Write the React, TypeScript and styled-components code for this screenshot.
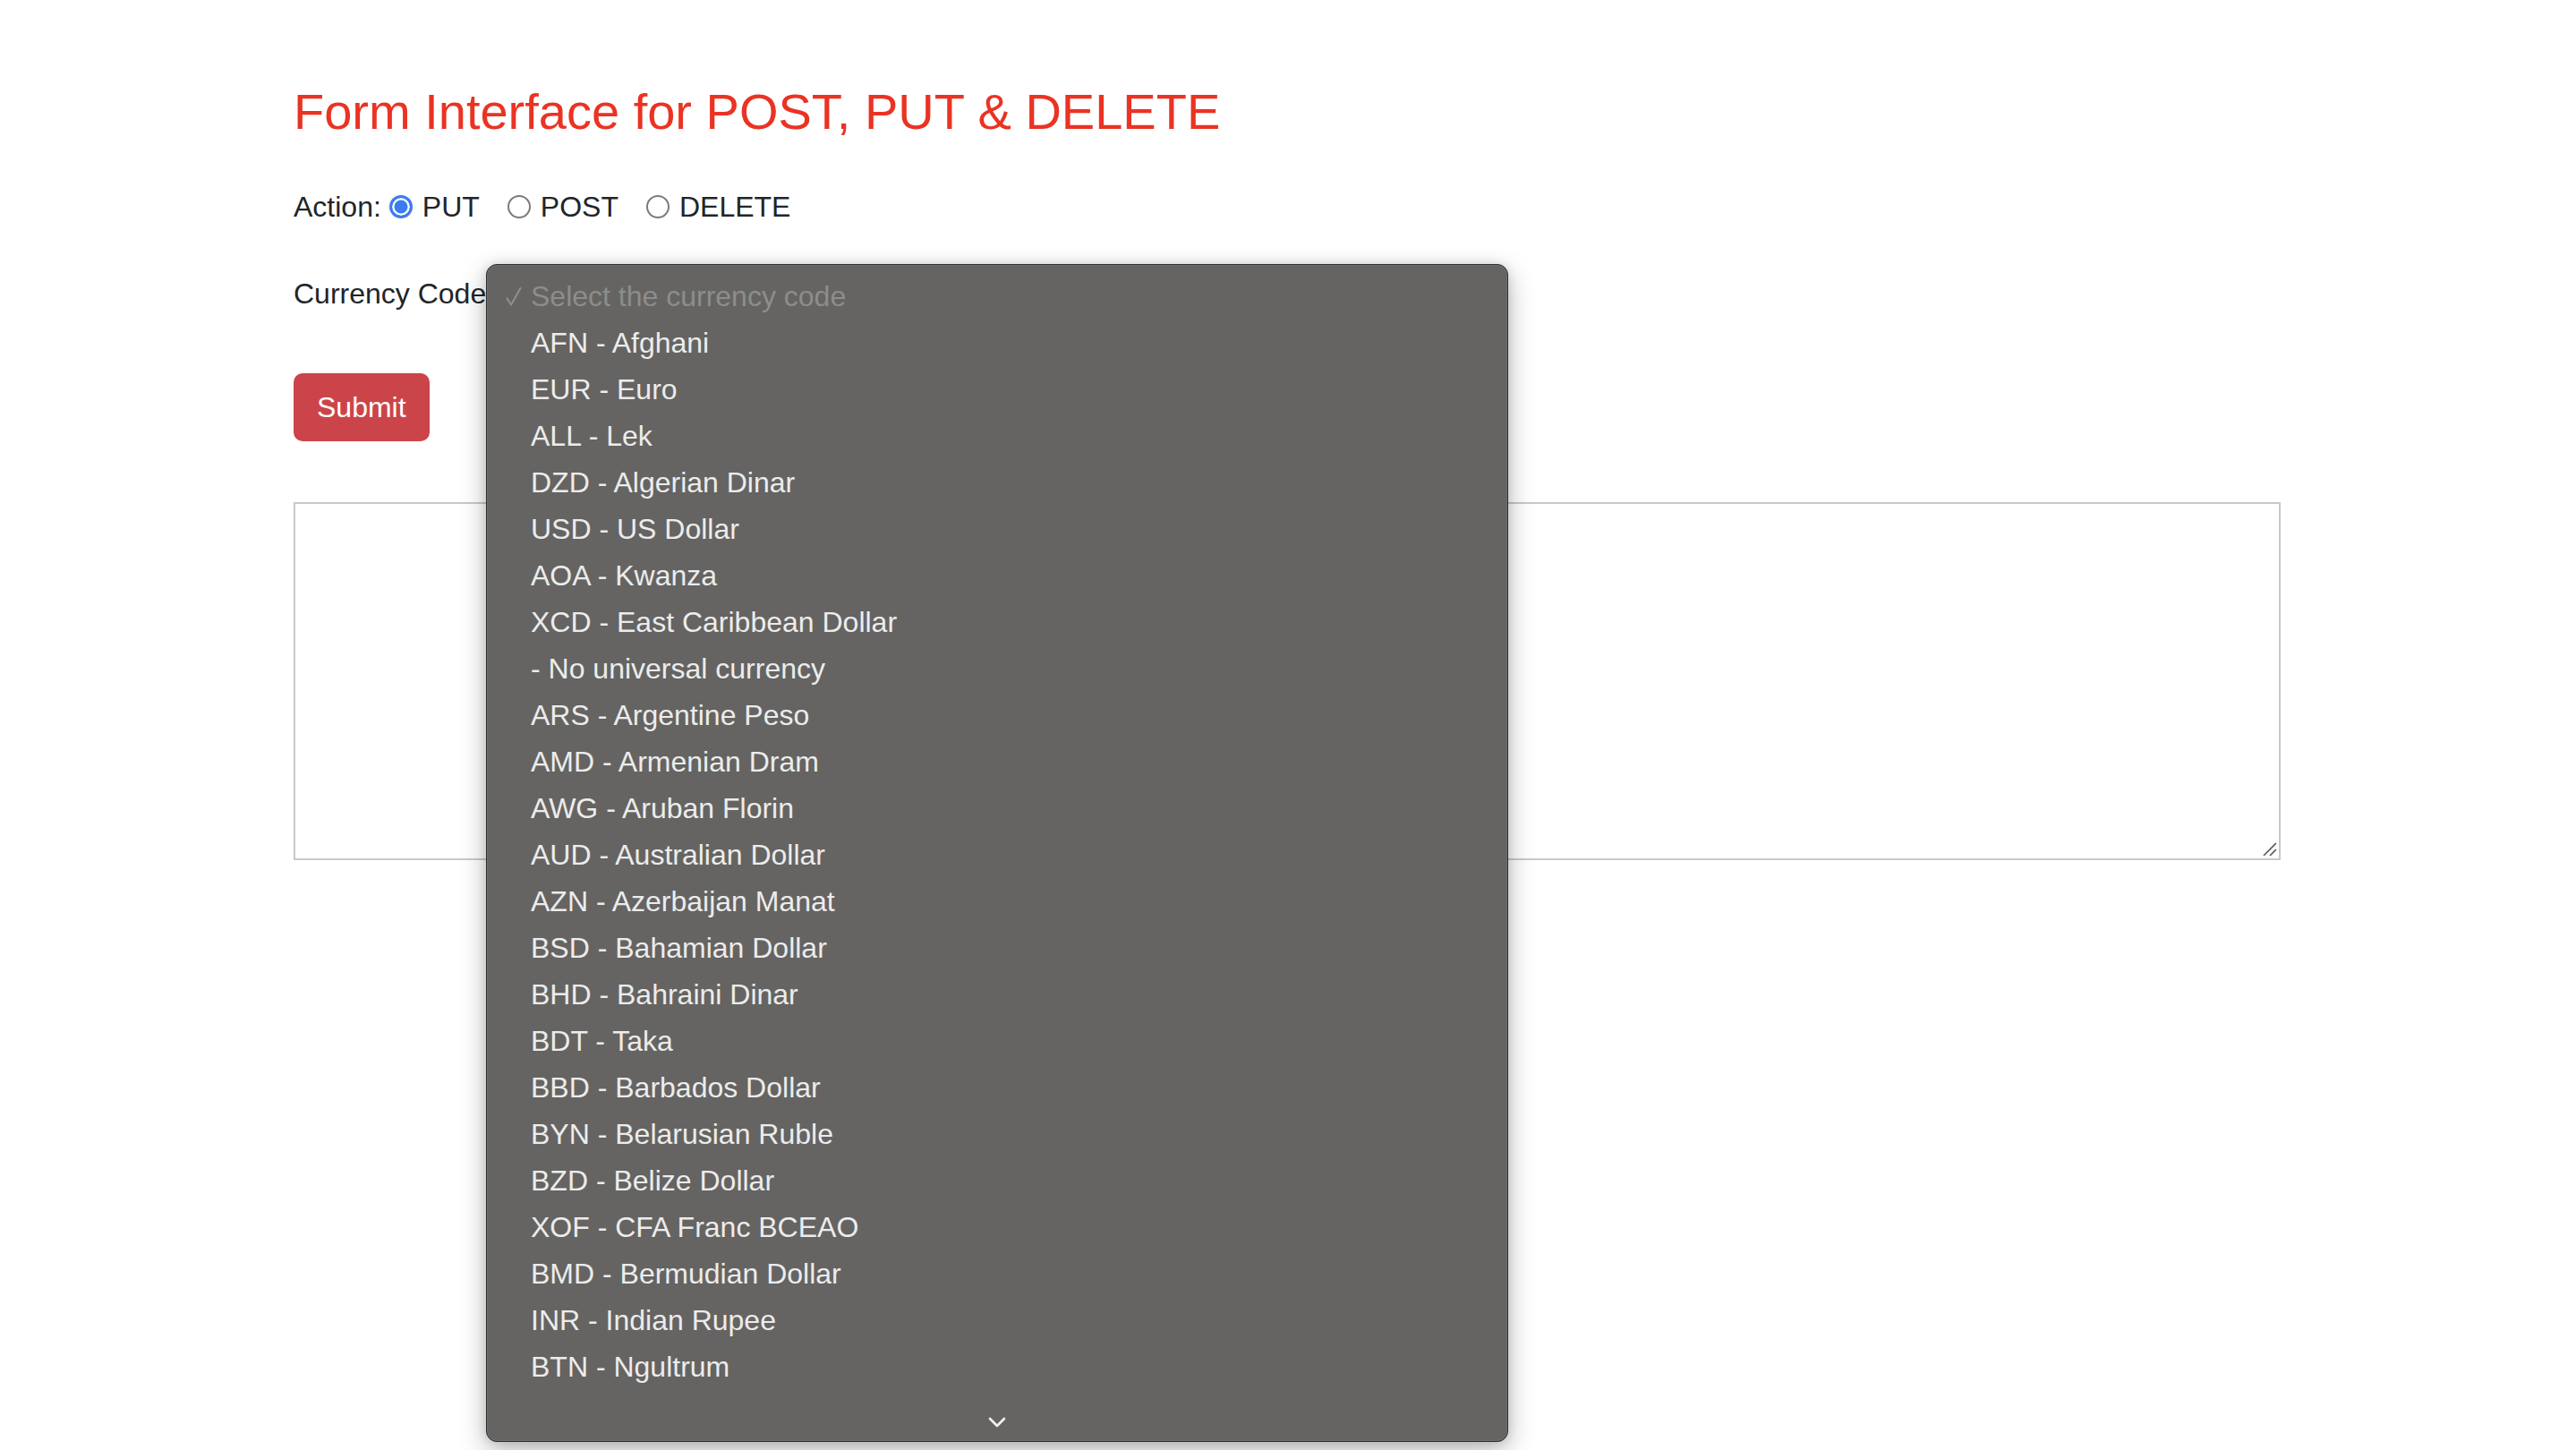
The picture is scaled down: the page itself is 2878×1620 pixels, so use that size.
import React from "react";
import styled, { createGlobalStyle } from "styled-components";

const GlobalStyle = createGlobalStyle`
  html, body {
    margin: 0;
    padding: 0;
    background: #ffffff;
  }
  body {
    font-family: "Liberation Sans", Arial, Helvetica, sans-serif;
    color: #212529;
  }
`;

const Page = styled.main`
  padding: 91px 0 0 328px;
  min-height: 1620px;
  box-sizing: border-box;
`;

const Title = styled.h1`
  margin: 0 0 49px;
  font-size: 56px;
  line-height: 67px;
  font-weight: 400;
  color: #ea3323;
`;

const Form = styled.form`
  display: flex;
  flex-direction: column;
  align-items: flex-start;
`;

const ActionRow = styled.div`
  display: flex;
  align-items: center;
  height: 48px;
  font-size: 32px;
  line-height: 48px;
  margin-bottom: 49px;
`;

const FieldLabel = styled.span`
  margin-right: 9px;
`;

const RadioOption = styled.label`
  display: flex;
  align-items: center;
  gap: 11px;
  margin-right: 31px;
  cursor: pointer;
`;

const Radio = styled.input.attrs({ type: "radio" })`
  appearance: none;
  -webkit-appearance: none;
  margin: 0;
  width: 26px;
  height: 26px;
  box-sizing: border-box;
  border-radius: 50%;
  border: 2px solid #7b7b7b;
  background: #ffffff;

  &:checked {
    border: 3px solid #3b7cf2;
    background: #3b7cf2;
    box-shadow: inset 0 0 0 2.5px #ffffff;
  }
`;

const CurrencyRow = styled.div`
  position: relative;
  height: 48px;
  font-size: 32px;
  line-height: 48px;
  margin-bottom: 65px;
  display: flex;
  align-items: center;
`;

const Popup = styled.div`
  position: absolute;
  top: -9px;
  left: 215px;
  width: 1142px;
  height: 1316px;
  box-sizing: border-box;
  display: flex;
  flex-direction: column;
  background: #656462;
  border: 1px solid #2e2e2e;
  border-radius: 12px;
  box-shadow: inset 0 0 0 1px rgba(255, 255, 255, 0.07),
    0 10px 30px rgba(0, 0, 0, 0.28), 0 0 12px rgba(0, 0, 0, 0.12);
  overflow: hidden;
  z-index: 10;
`;

const OptionList = styled.ul`
  list-style: none;
  margin: 0;
  padding: 8.5px 0 0;
`;

const OptionRow = styled.li<{ $placeholder?: boolean }>`
  display: grid;
  grid-template-columns: 49px 1fr;
  align-items: center;
  height: 52px;
  font-size: 32px;
  line-height: 52px;
  white-space: nowrap;
  color: ${(p) => (p.$placeholder ? "#8d8d8b" : "#ececec")};
`;

const CheckCell = styled.span`
  display: flex;
  align-items: center;
  padding-left: 21px;
`;

const ScrollFooter = styled.div`
  flex: 1;
  display: flex;
  justify-content: center;
  align-items: flex-start;
  padding-top: 30px;
`;

const SubmitButton = styled.button`
  font-family: inherit;
  font-size: 32px;
  line-height: 48px;
  padding: 12px 24px;
  border: 2px solid #cb444a;
  border-radius: 10px;
  background: #cb444a;
  color: #ffffff;
  margin-bottom: 68px;
  cursor: pointer;
`;

const TextAreaWrap = styled.div`
  position: relative;
  width: 2220px;
  height: 400px;
`;

const TextArea = styled.textarea`
  display: block;
  width: 100%;
  height: 100%;
  box-sizing: border-box;
  border: 2px solid #c9c9c9;
  border-radius: 0;
  resize: none;
  outline: none;
  font-family: inherit;
  font-size: 32px;
`;

const Grip = styled.svg`
  position: absolute;
  right: 4px;
  bottom: 4px;
  pointer-events: none;
`;

const currencies = [
  "AFN - Afghani",
  "EUR - Euro",
  "ALL - Lek",
  "DZD - Algerian Dinar",
  "USD - US Dollar",
  "AOA - Kwanza",
  "XCD - East Caribbean Dollar",
  "- No universal currency",
  "ARS - Argentine Peso",
  "AMD - Armenian Dram",
  "AWG - Aruban Florin",
  "AUD - Australian Dollar",
  "AZN - Azerbaijan Manat",
  "BSD - Bahamian Dollar",
  "BHD - Bahraini Dinar",
  "BDT - Taka",
  "BBD - Barbados Dollar",
  "BYN - Belarusian Ruble",
  "BZD - Belize Dollar",
  "XOF - CFA Franc BCEAO",
  "BMD - Bermudian Dollar",
  "INR - Indian Rupee",
  "BTN - Ngultrum",
];

const CheckMark = () => (
  <svg width="18" height="24" viewBox="0 0 18 24" fill="none">
    <path
      d="M1.5 14.5 L6 21.5 L16.5 3"
      stroke="#8d8d8b"
      strokeWidth="2.2"
      strokeLinecap="round"
      strokeLinejoin="round"
    />
  </svg>
);

const Chevron = () => (
  <svg width="20" height="12" viewBox="0 0 20 12" fill="none">
    <path
      d="M2 2 L10 10 L18 2"
      stroke="#f2f2f2"
      strokeWidth="2.6"
      strokeLinecap="round"
      strokeLinejoin="round"
    />
  </svg>
);

export default function App() {
  const [action, setAction] = React.useState("PUT");
  return (
    <>
      <GlobalStyle />
      <Page>
        <Title>Form Interface for POST, PUT &amp; DELETE</Title>
        <Form onSubmit={(e) => e.preventDefault()}>
          <ActionRow>
            <FieldLabel>Action:</FieldLabel>
            {["PUT", "POST", "DELETE"].map((a) => (
              <RadioOption key={a}>
                <Radio
                  name="action"
                  value={a}
                  checked={action === a}
                  onChange={() => setAction(a)}
                />
                {a}
              </RadioOption>
            ))}
          </ActionRow>
          <CurrencyRow>
            <span>Currency Code</span>
            <Popup role="listbox">
              <OptionList>
                <OptionRow $placeholder>
                  <CheckCell>
                    <CheckMark />
                  </CheckCell>
                  <span>Select the currency code</span>
                </OptionRow>
                {currencies.map((c) => (
                  <OptionRow key={c}>
                    <span />
                    <span>{c}</span>
                  </OptionRow>
                ))}
              </OptionList>
              <ScrollFooter>
                <Chevron />
              </ScrollFooter>
            </Popup>
          </CurrencyRow>
          <SubmitButton type="submit">Submit</SubmitButton>
          <TextAreaWrap>
            <TextArea />
            <Grip width="16" height="16" viewBox="0 0 16 16">
              <path d="M1 15 L15 1" stroke="#5a5a5a" strokeWidth="1.6" />
              <path d="M8 15 L15 8" stroke="#5a5a5a" strokeWidth="1.6" />
            </Grip>
          </TextAreaWrap>
        </Form>
      </Page>
    </>
  );
}
